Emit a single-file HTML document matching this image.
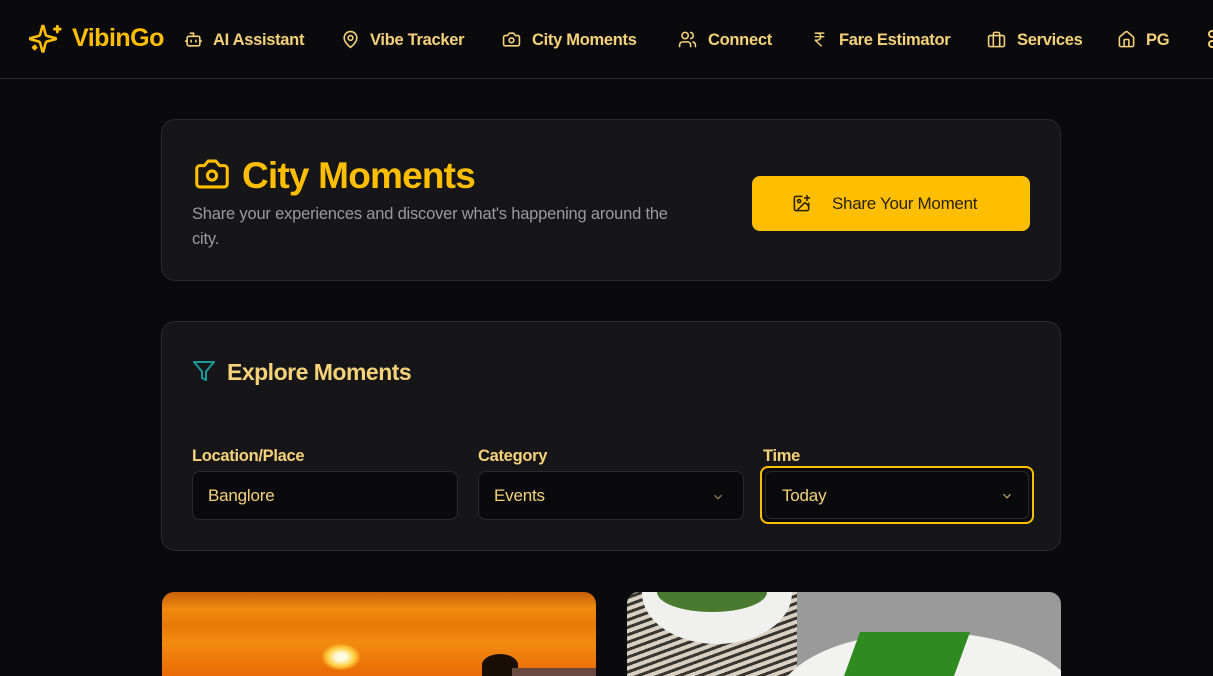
<!DOCTYPE html>
<html><head><meta charset="utf-8"><style>
*{box-sizing:border-box;margin:0;padding:0}
html,body{width:1213px;height:676px;overflow:hidden}
body{background:#0a0a0c;font-family:"Liberation Sans",sans-serif;position:relative}
.nav{position:absolute;left:0;top:0;width:1213px;height:79px;border-bottom:1px solid #2a2a2c;background:#0a0a0c;overflow:hidden}
.ni{position:absolute;top:30px;color:#f5d27a;font-size:16.5px;font-weight:bold;white-space:nowrap;letter-spacing:-0.3px}
.ni svg{position:absolute;left:0;top:0}
.ni span{position:absolute;top:1px}
.card{position:absolute;left:161px;width:900px;background:#161618;border:1px solid #2a2a2c;border-radius:14px}
.lbl{position:absolute;top:447px;color:#f5d27a;font-size:16.5px;font-weight:bold;letter-spacing:-0.3px}
.inp{position:absolute;top:471px;height:49px;background:#0a0a0c;border:1px solid #2a2a2c;border-radius:8px;color:#f5d27a;font-size:17px;padding:14px 15px;letter-spacing:-0.2px}
.chev{position:absolute;right:18px;top:18px}
</style></head><body>
<div class="nav">
 <svg style="position:absolute;left:29px;top:22px" width="34" height="34" viewBox="0 0 24 24" fill="none" stroke="#ffbf00" stroke-width="2" stroke-linecap="round" stroke-linejoin="round"><path d="M9.9 15.5a2 2 0 0 0-1.4-1.4l-6.1-1.6a.5.5 0 0 1 0-1L8.5 9.9a2 2 0 0 0 1.4-1.4l1.6-6.1a.5.5 0 0 1 1 0l1.6 6.1a2 2 0 0 0 1.4 1.4l6.1 1.6a.5.5 0 0 1 0 1l-6.1 1.6a2 2 0 0 0-1.4 1.4l-1.6 6.1a.5.5 0 0 1-1 0z" transform="translate(-1 1) scale(.9)"/><path d="M20 3v4M22 5h-4M4 17v2M5 18H3"/></svg>
 <div style="position:absolute;left:72px;top:24px;color:#ffbf00;font-size:25px;font-weight:bold;letter-spacing:-0.5px">VibinGo</div>
 <div class="ni" style="left:184px"><svg width="19" height="19" viewBox="0 0 24 24" fill="none" stroke="#f5d27a" stroke-width="2" stroke-linecap="round"><path d="M12 8V4H8"/><rect x="4" y="8" width="16" height="12" rx="2"/><path d="M2 14h2M20 14h2M15 13v2M9 13v2"/></svg><span style="left:29px">AI Assistant</span></div>
 <div class="ni" style="left:341px"><svg width="19" height="19" viewBox="0 0 24 24" fill="none" stroke="#f5d27a" stroke-width="2"><path d="M20 10c0 5-5.5 10-8 12-2.5-2-8-7-8-12a8 8 0 0 1 16 0z"/><circle cx="12" cy="10" r="3"/></svg><span style="left:29px">Vibe Tracker</span></div>
 <div class="ni" style="left:502px"><svg width="19" height="19" viewBox="0 0 24 24" fill="none" stroke="#f5d27a" stroke-width="2" stroke-linejoin="round"><path d="M14.5 4h-5L7 7H4a2 2 0 0 0-2 2v9a2 2 0 0 0 2 2h16a2 2 0 0 0 2-2V9a2 2 0 0 0-2-2h-3z"/><circle cx="12" cy="13" r="3"/></svg><span style="left:30px">City Moments</span></div>
 <div class="ni" style="left:678px"><svg width="19" height="19" viewBox="0 0 24 24" fill="none" stroke="#f5d27a" stroke-width="2" stroke-linecap="round"><path d="M16 21v-2a4 4 0 0 0-4-4H6a4 4 0 0 0-4 4v2"/><circle cx="9" cy="7" r="4"/><path d="M22 21v-2a4 4 0 0 0-3-3.9M16 3.1a4 4 0 0 1 0 7.8"/></svg><span style="left:30px">Connect</span></div>
 <div class="ni" style="left:811px"><svg width="17" height="19" viewBox="0 0 24 24" fill="none" stroke="#f5d27a" stroke-width="2" stroke-linecap="round"><path d="M6 3h12M6 8h12M6 13l8.5 8M6 13h3a5 5 0 0 0 0-10"/></svg><span style="left:28px">Fare Estimator</span></div>
 <div class="ni" style="left:987px"><svg width="19" height="19" viewBox="0 0 24 24" fill="none" stroke="#f5d27a" stroke-width="2"><rect x="2" y="7" width="20" height="14" rx="2"/><path d="M16 21V5a2 2 0 0 0-2-2h-4a2 2 0 0 0-2 2v16"/></svg><span style="left:30px">Services</span></div>
 <div class="ni" style="left:1117px"><svg width="19" height="19" viewBox="0 0 24 24" fill="none" stroke="#f5d27a" stroke-width="2" stroke-linejoin="round"><path d="M15 21v-8a1 1 0 0 0-1-1h-4a1 1 0 0 0-1 1v8"/><path d="M3 10a2 2 0 0 1 .7-1.5l7-6a2 2 0 0 1 2.6 0l7 6A2 2 0 0 1 21 10v9a2 2 0 0 1-2 2H5a2 2 0 0 1-2-2z"/></svg><span style="left:29px">PG</span></div>
 <svg style="position:absolute;left:1208px;top:30px" width="5" height="18" viewBox="0 0 5 18" fill="none" stroke="#f5d27a" stroke-width="2"><circle cx="4" cy="4" r="3"/><circle cx="4" cy="14" r="3"/></svg>
</div>

<div class="card" style="top:119px;height:162px">
 <svg style="position:absolute;left:31px;top:38px" width="38" height="32" viewBox="0 0 24 21" fill="none" stroke="#ffbf00" stroke-width="2" stroke-linejoin="round"><path d="M14.5 2h-5L7 5H4a2 2 0 0 0-2 2v10a2 2 0 0 0 2 2h16a2 2 0 0 0 2-2V7a2 2 0 0 0-2-2h-3z"/><circle cx="12" cy="11.5" r="3"/></svg>
 <div style="position:absolute;left:80px;top:35px;color:#ffbf00;font-size:37px;font-weight:bold;letter-spacing:-0.8px">City Moments</div>
 <div style="position:absolute;left:30px;top:82px;width:480px;color:#9a9a9c;font-size:16.5px;line-height:25px;letter-spacing:-0.2px">Share your experiences and discover what's happening around the city.</div>
 <div style="position:absolute;left:590px;top:56px;width:278px;height:55px;background:#ffbf00;border-radius:8px">
  <svg style="position:absolute;left:40px;top:18px" width="19" height="19" viewBox="0 0 24 24" fill="none" stroke="#2a2208" stroke-width="2" stroke-linecap="round" stroke-linejoin="round"><path d="M16 5h6M19 2v6M21 11.5V19a2 2 0 0 1-2 2H5a2 2 0 0 1-2-2V5a2 2 0 0 1 2-2h7.5"/><path d="m21 15-3.1-3.1a2 2 0 0 0-2.8 0L6 21"/><circle cx="9" cy="9" r="2"/></svg>
  <div style="position:absolute;left:80px;top:18px;color:#2a2208;font-size:17px;letter-spacing:-0.3px">Share Your Moment</div>
 </div>
</div>

<div class="card" style="top:321px;height:230px">
 <svg style="position:absolute;left:30px;top:37px" width="24" height="24" viewBox="0 0 24 24" fill="none" stroke="#1a9b9b" stroke-width="2" stroke-linejoin="round"><path d="M22 3H2l8 9.5V19l4 2v-8.5z"/></svg>
 <div style="position:absolute;left:65px;top:37px;color:#f5d27a;font-size:23px;font-weight:bold;letter-spacing:-0.5px">Explore Moments</div>
</div>
<div class="lbl" style="left:192px">Location/Place</div>
<div class="lbl" style="left:478px">Category</div>
<div class="lbl" style="left:763px">Time</div>
<div class="inp" style="left:192px;width:266px">Banglore</div>
<div class="inp" style="left:478px;width:266px">Events<svg class="chev" width="14" height="14" viewBox="0 0 24 24" fill="none" stroke="#9a8a5a" stroke-width="2"><path d="m6 9 6 6 6-6"/></svg></div>
<div class="inp" style="left:760px;top:466px;width:274px;height:58px;border:2px solid #ffbf00;padding:3px">
 <div style="width:100%;height:100%;border:1px solid #2a2a2c;border-radius:6px;padding:14px 16px;position:relative">Today<svg class="chev" style="right:14px;top:17px" width="14" height="14" viewBox="0 0 24 24" fill="none" stroke="#c8b070" stroke-width="2"><path d="m6 9 6 6 6-6"/></svg></div>
</div>

<div style="position:absolute;left:162px;top:592px;width:434px;height:84px;border-radius:12px 12px 0 0;overflow:hidden;background:linear-gradient(180deg,#c8600a 0%,#f08a10 20%,#e87a08 40%,#f28b12 60%,#ea6a05 100%)">
 <div style="position:absolute;left:160px;top:52px;width:38px;height:26px;border-radius:50%;background:radial-gradient(#fffbe0 20%,#ffd040 50%,rgba(255,160,20,0) 75%)"></div>
 <div style="position:absolute;left:320px;top:62px;width:36px;height:22px;border-radius:50% 50% 0 0;background:#1a0e08"></div>
 <div style="position:absolute;left:350px;top:76px;width:84px;height:8px;background:#6a4a40"></div>
</div>
<div style="position:absolute;left:627px;top:592px;width:434px;height:84px;border-radius:12px 12px 0 0;overflow:hidden;background:#9a9a9a">
 <div style="position:absolute;left:0;top:0;width:170px;height:84px;background:repeating-linear-gradient(160deg,#d8d0c0 0 4px,#3a3530 4px 7px)"></div>
 <div style="position:absolute;left:15px;top:-50px;width:150px;height:102px;border-radius:50%;background:#f0f0ee"></div>
 <div style="position:absolute;left:30px;top:-20px;width:110px;height:40px;border-radius:50%;background:#4a7a30"></div>
 <div style="position:absolute;left:150px;top:40px;width:300px;height:140px;border-radius:50%;background:#f2f2f0"></div>
 <div style="position:absolute;left:225px;top:40px;width:110px;height:44px;background:#2f8a20;transform:skewX(-20deg)"></div>
</div>
</body></html>
